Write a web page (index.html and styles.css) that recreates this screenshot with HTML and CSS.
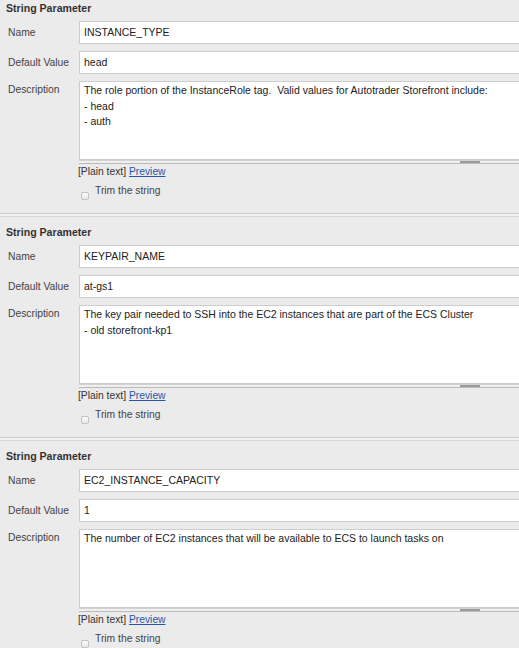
FILE: index.html
```html
<!DOCTYPE html>
<html>
<head>
<meta charset="utf-8">
<link rel="stylesheet" href="styles.css">
</head>
<body>
<div class="section">
  <div class="title">String Parameter</div>
  <div class="row"><div class="label">Name</div><div class="field"><div class="input">INSTANCE_TYPE</div></div></div>
  <div class="row"><div class="label">Default Value</div><div class="field"><div class="input">head</div></div></div>
  <div class="row"><div class="label desc">Description</div><div class="field"><div class="textarea">The role portion of the InstanceRole tag.&nbsp; Valid values for Autotrader Storefront include:<br>- head<br>- auth</div><div class="handle"><span class="grip"></span></div></div></div>
  <div class="row extra"><div></div><div class="field"><div class="plain">[Plain text] <a href="#">Preview</a></div><div class="trim"><span class="cb"></span><span>Trim the string</span></div></div></div>
</div>
<div class="sep"></div>
<div class="section">
  <div class="title">String Parameter</div>
  <div class="row"><div class="label">Name</div><div class="field"><div class="input">KEYPAIR_NAME</div></div></div>
  <div class="row"><div class="label">Default Value</div><div class="field"><div class="input">at-gs1</div></div></div>
  <div class="row"><div class="label desc">Description</div><div class="field"><div class="textarea">The key pair needed to SSH into the EC2 instances that are part of the ECS Cluster<br>- old storefront-kp1</div><div class="handle"><span class="grip"></span></div></div></div>
  <div class="row extra"><div></div><div class="field"><div class="plain">[Plain text] <a href="#">Preview</a></div><div class="trim"><span class="cb"></span><span>Trim the string</span></div></div></div>
</div>
<div class="sep"></div>
<div class="section">
  <div class="title">String Parameter</div>
  <div class="row"><div class="label">Name</div><div class="field"><div class="input">EC2_INSTANCE_CAPACITY</div></div></div>
  <div class="row"><div class="label">Default Value</div><div class="field"><div class="input">1</div></div></div>
  <div class="row"><div class="label desc">Description</div><div class="field"><div class="textarea">The number of EC2 instances that will be available to ECS to launch tasks on</div><div class="handle"><span class="grip"></span></div></div></div>
  <div class="row extra"><div></div><div class="field"><div class="plain">[Plain text] <a href="#">Preview</a></div><div class="trim"><span class="cb"></span><span>Trim the string</span></div></div></div>
</div>
</body>
</html>
```
FILE: styles.css
```css
html, body {
  margin: 0;
  padding: 0;
  background: #ebebeb;
  overflow: hidden;
}
body {
  font-family: "Liberation Sans", Arial, Helvetica, sans-serif;
  color: #333;
  width: 519px;
}
.section {
  padding-bottom: 13px;
}
.title {
  font-weight: bold;
  font-size: 10.6px;
  line-height: 16px;
  padding-left: 6px;
  color: #333;
}
.row {
  display: grid;
  grid-template-columns: 79px 520px;
  margin-top: 7px;
}
.title + .row {
  margin-top: 5px;
}
.row.extra {
  margin-top: 0;
}
.label {
  font-size: 10.3px;
  line-height: 23px;
  padding-left: 8px;
  color: #444;
  white-space: nowrap;
}
.label.desc {
  line-height: 18px;
}
.input {
  box-sizing: border-box;
  height: 23px;
  background: #fff;
  border: 1px solid #cdcdcd;
  border-right: none;
  padding-left: 4px;
  font-size: 10.5px;
  line-height: 21px;
  color: #222;
}
.textarea {
  box-sizing: border-box;
  height: 79px;
  background: #fff;
  border: 1px solid #cdcdcd;
  border-right: none;
  padding: 1px 0 0 4px;
  font-size: 10.5px;
  line-height: 15.5px;
  color: #222;
  white-space: nowrap;
}
.handle {
  box-sizing: border-box;
  height: 4px;
  border-top: 1px solid #d2d2d2;
  border-bottom: 1px solid #b9b9b9;
  background: #efefef;
  position: relative;
}
.grip {
  position: absolute;
  left: 381px;
  top: 0;
  width: 20px;
  height: 2px;
  background: #9a9a9a;
}
.plain {
  margin-top: 1px;
  font-size: 10.3px;
  line-height: 14px;
  color: #333;
  margin-left: -1px;
}
.plain a {
  color: #2a55a8;
  text-decoration: underline;
}
.trim {
  display: flex;
  align-items: flex-start;
  margin-top: 5px;
  font-size: 10.3px;
  line-height: 14px;
  color: #444;
}
.cb {
  box-sizing: border-box;
  width: 8px;
  height: 8px;
  margin: 8px 6px 0 2px;
  border: 1px solid #c4c4c4;
  border-radius: 2px;
  background: linear-gradient(#fdfdfd, #e8e8e8);
}
.sep {
  box-sizing: border-box;
  height: 4px;
  border-top: 1px solid #cbcbcb;
  border-bottom: 1px solid #d6d6d6;
  background: #f2f2f2;
  margin-bottom: 7px;
}
```
